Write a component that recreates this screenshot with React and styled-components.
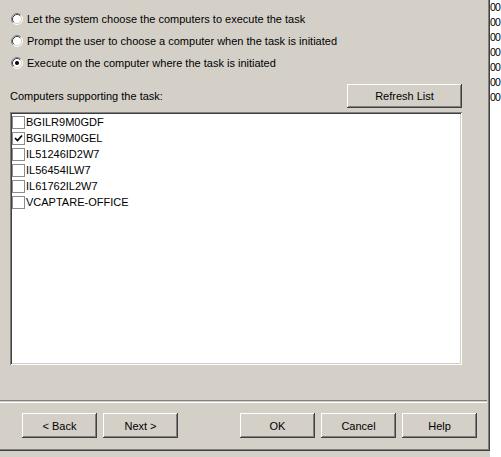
import React from 'react';
import styled, { createGlobalStyle } from 'styled-components';

const GlobalStyle = createGlobalStyle`
  html, body {
    margin: 0;
    padding: 0;
    background: #d4d0c8;
  }
  body {
    font-family: 'Liberation Sans', Tahoma, Arial, sans-serif;
    font-size: 11px;
    color: #000;
  }
`;

const Screen = styled.div`
  display: flex;
  width: 501px;
  height: 457px;
  overflow: hidden;
  background: #d4d0c8;
`;

const Dialog = styled.div`
  box-sizing: border-box;
  display: flex;
  flex-direction: column;
  width: 490px;
  height: 451px;
  flex-shrink: 0;
  background: #d4d0c8;
  border-right: 1px solid #404040;
  border-bottom: 1px solid #404040;
  box-shadow: inset -1px -1px 0 #808080;
`;

const BackWindow = styled.div`
  flex: 1;
  background: #fff;
  overflow: hidden;
  padding-left: 0;
  font-size: 10.5px;
  letter-spacing: -0.8px;
  line-height: 15px;
  white-space: nowrap;
`;

const OptionGroup = styled.div`
  display: flex;
  flex-direction: column;
  padding: 8px 0 0 11px;
`;

const OptionRow = styled.label`
  display: flex;
  align-items: center;
  gap: 4px;
  height: 22px;
`;

const ListHeader = styled.div`
  display: flex;
  align-items: center;
  justify-content: space-between;
  margin: 10px 27px 0 10px;
`;

const Button = styled.button`
  box-sizing: border-box;
  width: ${(p) => p.$width || 75}px;
  height: ${(p) => p.$height || 25}px;
  padding: 0;
  border: none;
  background: #d4d0c8;
  font-family: inherit;
  font-size: 11px;
  color: #000;
  box-shadow: inset -1px -1px 0 #404040, inset 1px 1px 0 #fff,
    inset -2px -2px 0 #808080, inset 2px 2px 0 #d4d0c8;
`;

const ListBox = styled.div`
  box-sizing: border-box;
  margin: 4px 0 0 10px;
  width: 452px;
  height: 253px;
  padding: 2px;
  background: #fff;
  box-shadow: inset 1px 1px 0 #808080, inset -1px -1px 0 #fff,
    inset 2px 2px 0 #404040, inset -2px -2px 0 #d4d0c8;
`;

const ListItem = styled.div`
  display: flex;
  align-items: center;
  gap: 1px;
  height: 16px;
`;

const CheckBox = styled.span`
  box-sizing: border-box;
  display: flex;
  align-items: center;
  justify-content: center;
  width: 13px;
  height: 13px;
  background: #fff;
  border: 1px solid #8c8c8c;
`;

const Separator = styled.div`
  margin-top: 35px;
  height: 1px;
  border-top: 1px solid #808080;
  border-bottom: 1px solid #fff;
  margin-right: 2px;
`;

const ButtonBar = styled.div`
  display: flex;
  margin: 10px 0 0 22px;
  gap: 5px;
`;

const ButtonGroup = styled.div`
  display: flex;
  gap: 6px;
  margin-left: ${(p) => p.$offset || 0}px;
`;

const Radio = ({ checked }) => (
  <svg width="12" height="12" viewBox="0 0 12 12">
    <circle cx="6" cy="6" r="5" fill="#fff" />
    <path d="M2.11 9.89 A5.5 5.5 0 0 1 9.89 2.11" stroke="#808080" fill="none" />
    <path d="M9.89 2.11 A5.5 5.5 0 0 1 2.11 9.89" stroke="#fff" fill="none" />
    <path d="M2.82 9.18 A4.5 4.5 0 0 1 9.18 2.82" stroke="#404040" fill="none" />
    <path d="M9.18 2.82 A4.5 4.5 0 0 1 2.82 9.18" stroke="#d4d0c8" fill="none" />
    {checked && <circle cx="6" cy="6" r="2" fill="#000" />}
  </svg>
);

const Check = () => (
  <svg width="9" height="9" viewBox="0 0 9 9">
    <path d="M1 4 L3.5 6.5 L8 1.5" stroke="#000" strokeWidth="1.7" fill="none" />
  </svg>
);

const options = [
  { label: 'Let the system choose the computers to execute the task' },
  { label: 'Prompt the user to choose a computer when the task is initiated' },
  { label: 'Execute on the computer where the task is initiated', checked: true },
];

const computers = [
  { name: 'BGILR9M0GDF' },
  { name: 'BGILR9M0GEL', checked: true },
  { name: 'IL51246ID2W7' },
  { name: 'IL56454ILW7' },
  { name: 'IL61762IL2W7' },
  { name: 'VCAPTARE-OFFICE' },
];

const App = () => {
  return (
    <>
      <GlobalStyle />
      <Screen>
        <Dialog>
          <OptionGroup>
            {options.map((o) => (
              <OptionRow key={o.label}>
                <Radio checked={o.checked} />
                <span>{o.label}</span>
              </OptionRow>
            ))}
          </OptionGroup>
          <ListHeader>
            <span>Computers supporting the task:</span>
            <Button $width={115} $height={24}>Refresh List</Button>
          </ListHeader>
          <ListBox>
            {computers.map((c) => (
              <ListItem key={c.name}>
                <CheckBox>{c.checked && <Check />}</CheckBox>
                <span>{c.name}</span>
              </ListItem>
            ))}
          </ListBox>
          <Separator />
          <ButtonBar>
            <ButtonGroup>
              <Button>&lt; Back</Button>
              <Button>Next &gt;</Button>
            </ButtonGroup>
            <ButtonGroup $offset={57}>
              <Button>OK</Button>
              <Button>Cancel</Button>
              <Button>Help</Button>
            </ButtonGroup>
          </ButtonBar>
        </Dialog>
        <BackWindow>
          {Array.from({ length: 7 }).map((_, i) => (
            <div key={i}>00</div>
          ))}
        </BackWindow>
      </Screen>
    </>
  );
};

export default App;
